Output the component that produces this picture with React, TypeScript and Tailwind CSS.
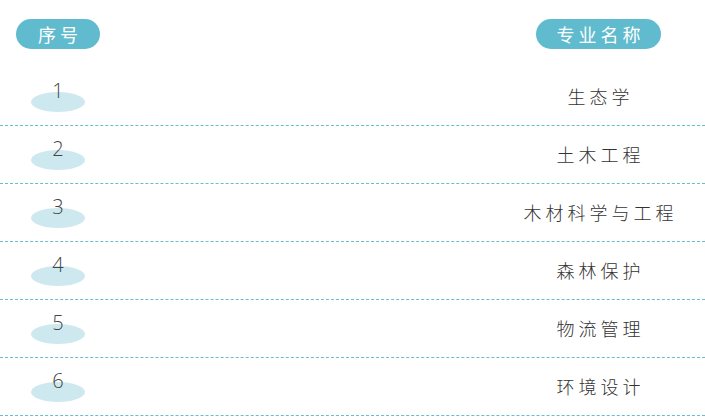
const majors = [
  { id: 1, name: '生态学' },
  { id: 2, name: '土木工程' },
  { id: 3, name: '木材科学与工程' },
  { id: 4, name: '森林保护' },
  { id: 5, name: '物流管理' },
  { id: 6, name: '环境设计' },
];

export default function App() {
  return (
    <div
      className="w-[705px] h-[417px] bg-white overflow-hidden"
      style={{ fontFamily: '"Noto Sans CJK SC", "Noto Sans", sans-serif' }}
    >
      {/* 表头 */}
      <div className="flex justify-between pl-[16px] pr-[44px] pt-[19px] pb-[19px]">
        <div className="w-[84px] h-[30px] rounded-full bg-[#5fbbcd] text-white text-[18px] tracking-[4px] pl-[4px] flex items-center justify-center leading-none">
          序号
        </div>
        <div className="w-[125px] h-[30px] rounded-full bg-[#5fbbcd] text-white text-[18px] tracking-[4px] pl-[4px] flex items-center justify-center leading-none">
          专业名称
        </div>
      </div>

      {/* 列表 */}
      {majors.map((m) => (
        <div
          key={m.id}
          className="h-[58px] flex justify-between items-center pl-[16px] pr-[44px] border-b border-dashed border-[#6bbdcc]"
        >
          <div className="w-[84px] h-full relative flex justify-center">
            <div className="absolute top-[24px] w-[54px] h-[20px] rounded-[50%] bg-[#cde9ef]" />
            <span
              className="relative mt-[13px] text-[20px] leading-[20px] font-light text-[#444]"
              style={{ fontFamily: '"Open Sans", sans-serif' }}
            >
              {m.id}
            </span>
          </div>
          <div className="w-[125px] flex justify-center pl-[4px]">
            <span className="whitespace-nowrap text-[18px] tracking-[4px] text-[#333] font-light">
              {m.name}
            </span>
          </div>
        </div>
      ))}
    </div>
  );
}
